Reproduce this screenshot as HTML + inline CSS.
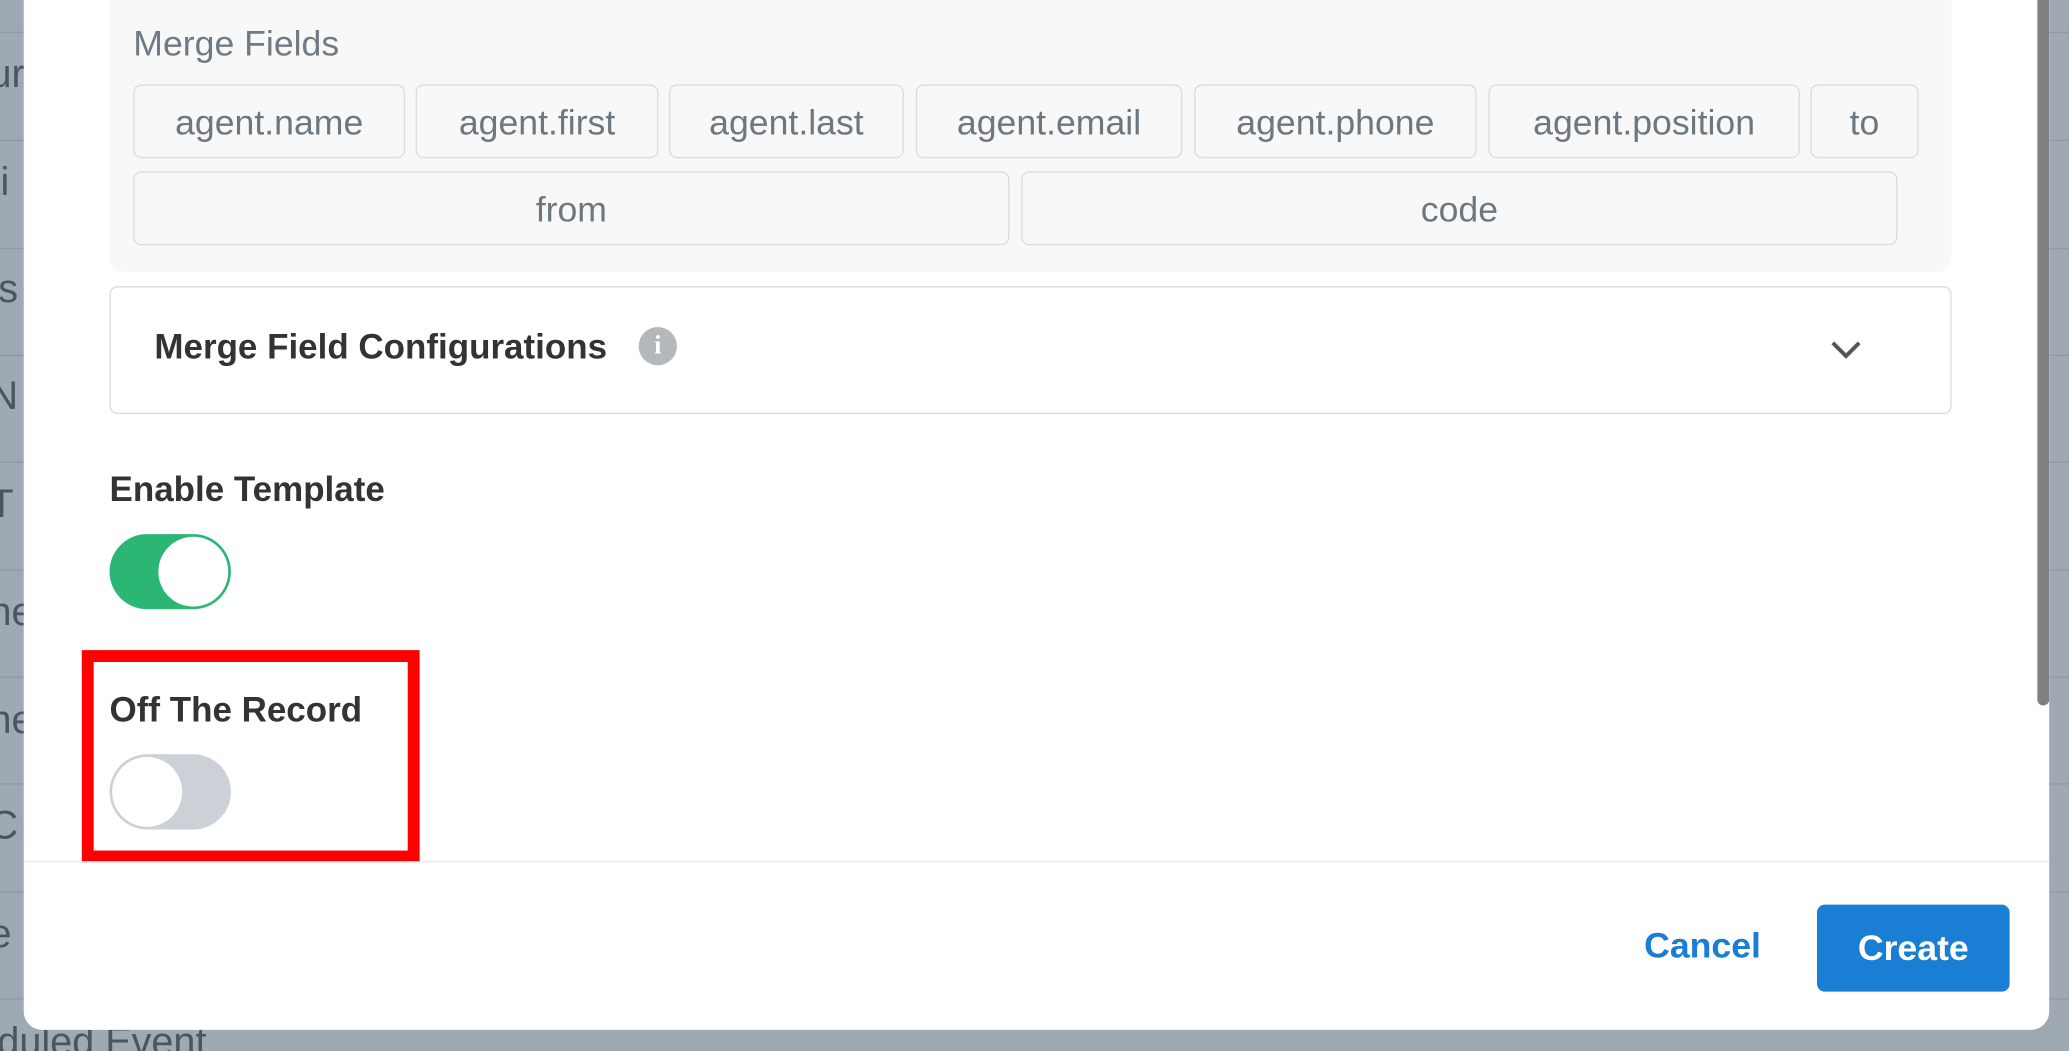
<!DOCTYPE html>
<html><head><meta charset="utf-8"><style>
html,body{margin:0;padding:0;overflow:hidden;width:2069px;height:1051px;background:#9ea9b3;font-family:"Liberation Sans",sans-serif}
#s{position:absolute;left:0;top:0;width:1568px;height:797px;transform:scale(1.31952,1.3187);transform-origin:0 0;overflow:hidden}
.bgrow{position:absolute;left:0;width:1568px;border-top:1px solid #8f9aa4}
.bgt{position:absolute;left:-8px;font-size:30px;color:#4a5560}
#m{position:absolute;left:18px;top:-20px;width:1535px;height:801px;background:#fff;border-radius:14px;overflow:hidden}
.a{position:absolute}
.chip{position:absolute;height:56px;border:1px solid #d8dce0;border-radius:6px;background:#f8f8f8;color:#6d7780;font-size:27px;line-height:56px;text-align:center;box-sizing:border-box}
.lb{font-size:26.5px;font-weight:bold;color:#333}
</style></head><body><div id="s">
<div class="bgrow" style="top:24px"></div><div class="bgrow" style="top:106px"></div><div class="bgrow" style="top:188px"></div><div class="bgrow" style="top:269px"></div><div class="bgrow" style="top:350px"></div><div class="bgrow" style="top:432px"></div><div class="bgrow" style="top:513px"></div><div class="bgrow" style="top:594px"></div><div class="bgrow" style="top:676px"></div><div class="bgrow" style="top:757px"></div>
<div class="bgt" style="top:40px">ur</div><div class="bgt" style="top:122px">ti</div><div class="bgt" style="top:203px">ls</div><div class="bgt" style="top:284px">N</div><div class="bgt" style="top:366px">T</div><div class="bgt" style="top:448px">ne</div><div class="bgt" style="top:530px">ne</div><div class="bgt" style="top:610px">C</div><div class="bgt" style="top:692px">e</div>
<div class="bgt" style="top:774px;left:-2px">duled Event</div>
<div id="m">
<div class="a" style="left:65px;top:0;width:1396px;height:226px;background:#f8f8f8;border-radius:10px"></div>
<div class="a" style="left:83px;top:38px;font-size:27px;color:#707a84">Merge Fields</div>
<div class="chip" style="left:83px;top:84px;width:206px">agent.name</div>
<div class="chip" style="left:297px;top:84px;width:184px">agent.first</div>
<div class="chip" style="left:489px;top:84px;width:178px">agent.last</div>
<div class="chip" style="left:676px;top:84px;width:202px">agent.email</div>
<div class="chip" style="left:887px;top:84px;width:214px">agent.phone</div>
<div class="chip" style="left:1110px;top:84px;width:236px">agent.position</div>
<div class="chip" style="left:1354px;top:84px;width:82px">to</div>
<div class="chip" style="left:83px;top:150px;width:664px">from</div>
<div class="chip" style="left:756px;top:150px;width:664px">code</div>
<div class="a" style="left:65px;top:237px;width:1396px;height:97px;border:1px solid #d8dce0;border-radius:6px;box-sizing:border-box"></div>
<div class="a lb" style="left:99px;top:268px">Merge Field Configurations</div>
<div class="a" style="left:466px;top:268px;width:29px;height:29px;border-radius:50%;background:#b5b8bb;color:#fff;font-size:20px;font-weight:bold;text-align:center;line-height:29px;font-family:'Liberation Serif',serif">i</div>
<svg class="a" style="left:1368px;top:276px" width="26" height="18"><path d="M3 4 L13 14 L23 4" stroke="#555" stroke-width="3" fill="none"/></svg>
<div class="a lb" style="left:65px;top:376px">Enable Template</div>
<div class="a" style="left:65px;top:425px;width:92px;height:57px;border-radius:29px;background:#2bb673"></div>
<div class="a" style="left:102px;top:427px;width:53px;height:53px;border-radius:50%;background:#fff"></div>
<div class="a" style="left:44px;top:513px;width:256px;height:161px;border:9px solid #f00;box-sizing:border-box"></div>
<div class="a lb" style="left:65px;top:543px">Off The Record</div>
<div class="a" style="left:65px;top:592px;width:92px;height:57px;border-radius:29px;background:#ccd1d8"></div>
<div class="a" style="left:67px;top:594px;width:53px;height:53px;border-radius:50%;background:#fff"></div>
<div class="a" style="left:0;top:673px;width:1535px;border-top:1px solid #e8eaed"></div>
<div class="a" style="left:1228px;top:722px;font-size:27px;color:#1a7fd4;font-weight:bold">Cancel</div>
<div class="a" style="left:1359px;top:706px;width:146px;height:66px;border-radius:6px;background:#1a7fd4;color:#fff;font-size:27px;font-weight:bold;text-align:center;line-height:66px">Create</div>
<div class="a" style="left:1526px;top:0;width:9px;height:555px;background:#808080;border-radius:0 0 5px 5px"></div>
</div>
</div></body></html>
